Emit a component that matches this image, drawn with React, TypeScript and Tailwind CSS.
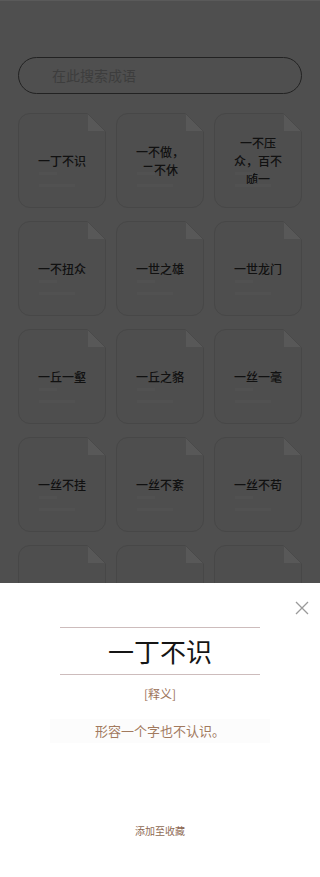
import React from "react";

const idioms = [
  "一丁不识",
  "一不做，二不休",
  "一不压众，百不随一",
  "一不扭众",
  "一世之雄",
  "一世龙门",
  "一丘一壑",
  "一丘之貉",
  "一丝一毫",
  "一丝不挂",
  "一丝不紊",
  "一丝不苟",
  "一丝半缕",
  "一个半个",
  "一串骊珠",
];

function Card({ title }: { title: string }) {
  return (
    <div className="relative h-[95px] w-[88px] rounded-[12px] border border-[#474747] bg-[#4e4e4e] flex items-center justify-center">
      <div className="w-[50px] text-center text-[12px] font-medium leading-[18px] text-[#111111]">{title}</div>
      <div className="absolute left-[20px] top-[58px] h-[3px] w-[18px] bg-[#515151]" />
      <div className="absolute left-[20px] top-[70px] h-[3px] w-[36px] bg-[#515151]" />
      <svg className="absolute -right-px -top-px" width="19" height="19" viewBox="0 0 19 19">
        <polygon points="0,0 19,0 19,19" fill="#4f4f4f" />
        <polygon points="1,1 1,18 18,18" fill="#585858" />
        <line x1="1" y1="1" x2="18" y2="18" stroke="#4a4a4a" strokeWidth="1" />
      </svg>
    </div>
  );
}

export default function App() {
  return (
    <div
      className="relative h-[877px] w-[320px] overflow-hidden bg-[#4f4f4f]"
      style={{ fontFamily: '"Noto Sans CJK SC", "Noto Sans", sans-serif' }}
    >
      <div className="h-px bg-[#5a5a5a]" />
      <div className="px-[18px] pt-[56px]">
        <div className="flex h-[37px] items-center rounded-full border border-[#222222] pl-[33px]">
          <span className="text-[14px] text-[#3d3d3d]">在此搜索成语</span>
        </div>
        <div className="mt-[19px] grid grid-cols-[88px_88px_88px] gap-x-[10px] gap-y-[13px]">
          {idioms.map((t) => (
            <Card key={t} title={t} />
          ))}
        </div>
      </div>

      <div className="absolute bottom-0 left-0 right-0 h-[294px] bg-white">
        <div className="flex justify-end pr-[10px] pt-[17px]">
          <svg width="16" height="16" viewBox="0 0 16 16">
            <path d="M2 2 L14 14 M14 2 L2 14" stroke="#9a9a9a" strokeWidth="1.3" fill="none" />
          </svg>
        </div>
        <div className="mx-auto mt-[11px] w-[200px] border-y border-[#cdbcbc] py-[6px] text-center text-[26px] leading-[34px] text-[#151515]">
          一丁不识
        </div>
        <div className="mt-[10px] text-center text-[12px] leading-[18px] text-[#9c7358]">[释义]</div>
        <div className="mx-[50px] mt-[16px] bg-[#fcfcfc] py-[2px] text-center text-[13px] leading-[20px] text-[#a27a5e]">
          形容一个字也不认识。
        </div>
        <div className="mt-[81px] text-center text-[10px] leading-[14px] text-[#8e6a53]">添加至收藏</div>
      </div>
    </div>
  );
}
